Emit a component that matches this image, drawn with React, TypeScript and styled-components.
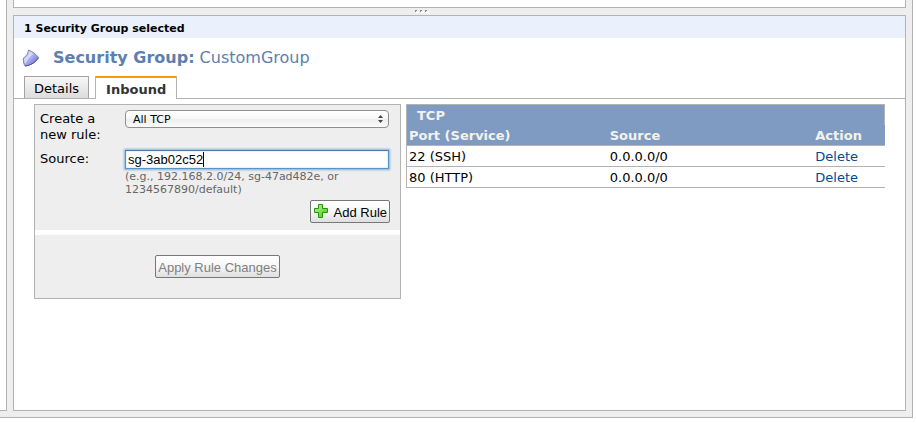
import React, { useEffect, useRef } from "react";
import styled, { createGlobalStyle } from "styled-components";

const line = "#b3b3b3";
const chrome = "#eeeeee";
const blue = "#5b80b0";

const GlobalStyle = createGlobalStyle`
  *, *::before, *::after { box-sizing: border-box; }
  body {
    margin: 0;
    background: #fff;
    color: #000;
    font-family: Verdana, "DejaVu Sans", sans-serif;
    font-size: 13px;
    line-height: 16px;
  }
`;

const Page = styled.div`
  display: flex;
  min-height: 100vh;
  padding: 0 3px 5px 0;
`;

const Shell = styled.div`
  flex: 1;
  display: flex;
  gap: 6px;
  padding: 0 6px 6px 0;
  background: ${chrome};
  border: solid ${line};
  border-width: 0 1px 1px 0;
`;

const Navigation = styled.aside`
  flex: 0 0 7px;
  background: #fff;
  border: solid ${line};
  border-width: 0 1px 1px 0;
`;

const Workspace = styled.main`
  flex: 1;
  min-width: 0;
  display: flex;
  flex-direction: column;
`;

const ListPane = styled.section`
  height: 8px;
  background: #fff;
  border: 1px solid ${line};
  border-top: 0;
`;

const Splitter = styled.div`
  height: 7px;
  display: flex;
  justify-content: center;
  align-items: center;
  padding-right: 76px;
`;

const DetailPane = styled.section`
  flex: 1;
  background: #fff;
  border: 1px solid ${line};
`;

const SelectionBar = styled.header`
  padding: 5px 10px 1px;
  background: #eaf1fd;
  font-size: 11px;
  font-weight: bold;
`;

const Title = styled.h1`
  display: flex;
  align-items: center;
  gap: 12px;
  margin: 0;
  padding: 10px 8px 8px;
  color: ${blue};
  font-size: 16px;
  line-height: 20px;
  font-weight: normal;
`;

const Tabs = styled.div`
  display: flex;
  align-items: flex-end;
  gap: 6px;
  padding-left: 10px;
  border-bottom: 1px solid ${line};
`;

const Tab = styled.button<{ $active?: boolean }>`
  height: ${(p) => (p.$active ? 23 : 22)}px;
  margin-bottom: ${(p) => (p.$active ? -1 : 0)}px;
  padding: 2px ${(p) => (p.$active ? 10 : 9)}px 0;
  border: 1px solid ${(p) => (p.$active ? line : "#a3a3a3")};
  border-bottom: 0;
  border-top: ${(p) => (p.$active ? "2px solid #ff9900" : "1px solid #a3a3a3")};
  border-radius: 1px 1px 0 0;
  background: ${(p) => (p.$active ? "#fff" : "linear-gradient(#f7f7f7, #dcdcdc)")};
  color: ${(p) => (p.$active ? "#333" : "#000")};
  font: inherit;
  font-weight: ${(p) => (p.$active ? "bold" : "normal")};
`;

const Content = styled.div`
  display: flex;
  align-items: flex-start;
  gap: 5px;
  padding: 5px 20px 20px;
`;

const RuleForm = styled.form`
  flex: 0 0 367px;
  border: 1px solid ${line};
  background: ${chrome};
`;

const Fields = styled.div`
  display: grid;
  grid-template-columns: 85px 1fr;
  row-gap: 4px;
  padding: 5px 11px 7px 5px;
`;

const Label = styled.label`
  padding: 1px 10px 3px 0;
`;

const SelectBox = styled.div`
  display: grid;
  align-items: center;
  height: 18px;
  & > * { grid-area: 1 / 1; }
  & > svg { justify-self: end; margin-right: 6px; pointer-events: none; }
`;

const Select = styled.select`
  appearance: none;
  width: 100%;
  height: 18px;
  padding: 0 20px 0 7px;
  border: 1px solid #8f8f8f;
  border-radius: 4px;
  background: linear-gradient(#fff, #f6f6f6 50%, #ededed 50%, #fbfbfb);
  color: #000;
  font: 11px "Lucida Grande", "DejaVu Sans", sans-serif;
`;

const Source = styled.div`
  position: relative;
`;

const SourceInput = styled.input`
  display: block;
  width: 100%;
  height: 19px;
  padding: 0 2px;
  border: 1px solid #5c93c4;
  border-top-color: #4c7ba8;
  outline: 0;
  box-shadow: 0 0 2px 1px #7fb0dc, inset 0 0 2px #a9cdec;
  background: #fff;
  color: #000;
  caret-color: transparent;
  font: 13px Helvetica, "Liberation Sans", sans-serif;
`;

const Caret = styled.span`
  position: absolute;
  left: 78px;
  top: 2px;
  width: 1px;
  height: 15px;
  background: #000;
`;

const Hint = styled.p`
  margin: 0;
  padding-top: 1px;
  color: #666;
  font-size: 11px;
  line-height: 13px;
`;

const Button = styled.button`
  display: inline-flex;
  align-items: center;
  gap: 5px;
  height: 23px;
  padding: 1px 2px 0;
  border: 1px solid #777;
  border-radius: 2px;
  background: linear-gradient(#fff, #f6f6f6 50%, #dfdfdf);
  color: #000;
  font: 13px Helvetica, "Liberation Sans", sans-serif;
  white-space: nowrap;
  &:disabled { color: #808080; }
`;

const AddRow = styled.div`
  grid-column: 1 / -1;
  display: flex;
  justify-content: flex-end;
  margin-right: -1px;
`;

const ApplyRow = styled.div`
  display: flex;
  justify-content: center;
  padding: 20px;
  border-top: 5px solid #fff;
`;

const Rules = styled.table`
  flex: 1;
  border-collapse: separate;
  border-spacing: 0;
  border: solid ${line};
  border-width: 1px 0 0 1px;
  table-layout: fixed;
`;

const Column = styled.col<{ $share: number }>`
  width: ${(p) => p.$share}%;
`;

const HeadCell = styled.th<{ $group?: boolean }>`
  height: ${(p) => (p.$group ? 20 : 21)}px;
  padding: ${(p) => (p.$group ? "1px 10px 0" : "1px 2px 0")};
  background: #7f9bc2;
  border: solid ${line};
  border-width: ${(p) => (p.$group ? "0 1px 0 0" : "0 0 1px")};
  color: #f4f2ec;
  text-align: left;
`;

const Cell = styled.td`
  height: 21px;
  padding: 1px 2px 0;
  border-bottom: 1px solid ${line};
`;

const DeleteLink = styled.a`
  color: #004b91;
  text-decoration: none;
`;

const ShieldIcon = () => (
  <svg width="19" height="20" viewBox="0 0 19 20" aria-hidden="true">
    <defs>
      <linearGradient id="shield" x1="0" y1="0" x2="1" y2="1">
        <stop offset="0" stopColor="#e6e6fc" />
        <stop offset="0.5" stopColor="#a9aced" />
        <stop offset="1" stopColor="#5c5cc8" />
      </linearGradient>
    </defs>
    <path d="M6.500 2C10.500 3.500 14 6 16.500 9.500C14 14 9 17.300 3 18C1.500 15.500 1 12.500 1.500 10C4.300 8.500 6 5.500 6.500 2Z" fill="url(#shield)" stroke="#8383b4" strokeWidth="1" />
    <path d="M7.500 3.500C7 7 5.200 9.400 2.400 10.800C2.200 12.500 2.500 14.500 3.200 16C5 12.500 7.500 9 11.500 5.800Z" fill="#fff" opacity=".45" />
    <path d="M3 18C9 17.300 14 14 16.600 9.600" fill="none" stroke="#5252a4" strokeWidth="1" />
  </svg>
);

const PlusIcon = () => (
  <svg width="16" height="16" viewBox="0 0 16 16" aria-hidden="true">
    <defs>
      <linearGradient id="plus" x1="0" y1="0" x2="1" y2="1">
        <stop offset="0" stopColor="#c4f5a0" />
        <stop offset="1" stopColor="#3fc414" />
      </linearGradient>
    </defs>
    <path d="M5.500 .5h4v4h5v4h-5v5h-4v-5h-4v-4h4z" fill="url(#plus)" stroke="#219608" />
  </svg>
);

const rules = [
  { port: "22 (SSH)", source: "0.0.0.0/0" },
  { port: "80 (HTTP)", source: "0.0.0.0/0" },
];

export default function App() {
  const source = useRef<HTMLInputElement>(null);

  useEffect(() => {
    const input = source.current;
    if (!input) return;
    input.focus();
    input.setSelectionRange(input.value.length, input.value.length);
  }, []);

  return (
    <Page>
      <GlobalStyle />
      <Shell>
        <Navigation />
        <Workspace>
          <ListPane />
          <Splitter>
            <svg width="14" height="3" aria-hidden="true" shapeRendering="crispEdges">
              <path d="M1 2.500h2V1M6 2.500h2V1M11 2.500h2V1" stroke="#fff" fill="none" />
              <path d="M0 .5h2M.5 0v2M5 .5h2M5.500 0v2M10 .5h2M10.500 0v2" stroke="#888" fill="none" />
            </svg>
          </Splitter>
          <DetailPane>
            <SelectionBar>1 Security Group selected</SelectionBar>
            <Title>
              <ShieldIcon />
              <span><b>Security Group:</b> CustomGroup</span>
            </Title>
            <Tabs role="tablist">
              <Tab type="button" role="tab" aria-selected={false}>Details</Tab>
              <Tab type="button" role="tab" aria-selected $active>Inbound</Tab>
            </Tabs>
            <Content>
              <RuleForm onSubmit={(e) => e.preventDefault()}>
                <Fields>
                  <Label htmlFor="rule">Create a new rule:</Label>
                  <SelectBox>
                    <Select id="rule" defaultValue="All TCP">
                      <option>All TCP</option>
                    </Select>
                    <svg width="5" height="8" viewBox="0 0 5 8" aria-hidden="true">
                      <path d="M2.500 0L5 3H0zM2.500 8L0 5h5z" fill="#444" />
                    </svg>
                  </SelectBox>
                  <Label htmlFor="source">Source:</Label>
                  <Source>
                    <SourceInput id="source" ref={source} defaultValue="sg-3ab02c52" aria-describedby="hint" />
                    <Caret aria-hidden="true" />
                    <Hint id="hint">(e.g., 192.168.2.0/24, sg-47ad482e, or 1234567890/default)</Hint>
                  </Source>
                  <AddRow>
                    <Button type="submit"><PlusIcon />Add Rule</Button>
                  </AddRow>
                </Fields>
                <ApplyRow>
                  <Button type="button" disabled>Apply Rule Changes</Button>
                </ApplyRow>
              </RuleForm>
              <Rules>
                <colgroup>
                  <Column $share={42} />
                  <Column $share={43} />
                  <Column $share={15} />
                </colgroup>
                <thead>
                  <tr><HeadCell colSpan={3} $group>TCP</HeadCell></tr>
                  <tr>
                    <HeadCell>Port (Service)</HeadCell>
                    <HeadCell>Source</HeadCell>
                    <HeadCell>Action</HeadCell>
                  </tr>
                </thead>
                <tbody>
                  {rules.map((r) => (
                    <tr key={r.port}>
                      <Cell>{r.port}</Cell>
                      <Cell>{r.source}</Cell>
                      <Cell><DeleteLink href="#delete">Delete</DeleteLink></Cell>
                    </tr>
                  ))}
                </tbody>
              </Rules>
            </Content>
          </DetailPane>
        </Workspace>
      </Shell>
    </Page>
  );
}
